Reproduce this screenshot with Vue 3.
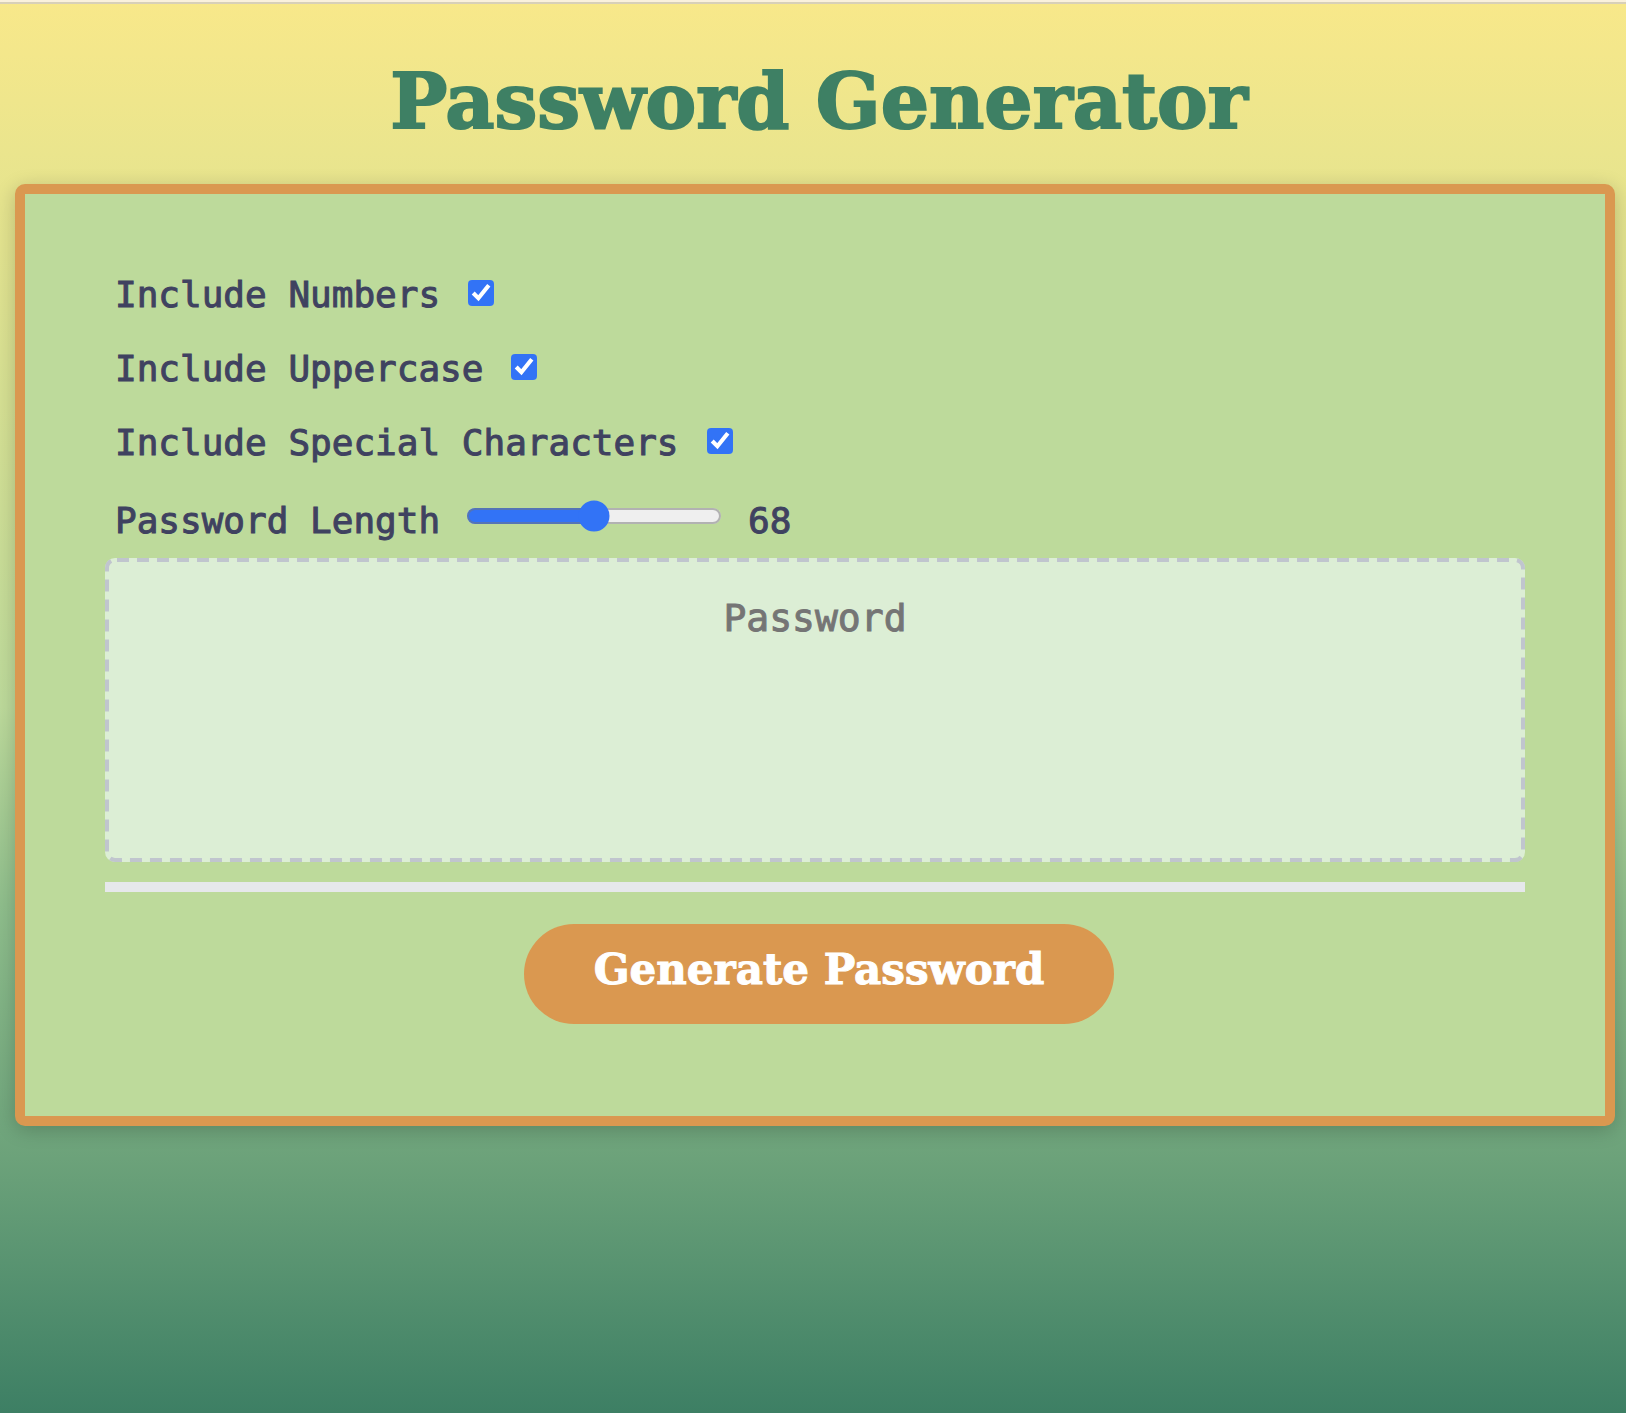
<script setup>
import { ref } from 'vue'

const options = ref([
  { id: 'numbers', label: 'Include Numbers', checked: true },
  { id: 'uppercase', label: 'Include Uppercase', checked: true },
  { id: 'special', label: 'Include Special Characters', checked: true },
])
const length = ref(68)
const password = ref('')

const pools = {
  numbers: '0123456789',
  uppercase: 'ABCDEFGHIJKLMNOPQRSTUVWXYZ',
  special: '!@#$%^&*()-_=+?',
}

function generate() {
  const chars = options.value
    .filter((option) => option.checked)
    .reduce((all, option) => all + pools[option.id], 'abcdefghijklmnopqrstuvwxyz')
  password.value = Array.from(
    { length: Number(length.value) },
    () => chars[Math.floor(Math.random() * chars.length)],
  ).join('')
}
</script>

<template>
  <div class="page">
    <header>
      <h1>Password Generator</h1>
    </header>
    <main class="card">
      <div v-for="option in options" :key="option.id" class="row">
        <label :for="option.id">{{ option.label }}</label>
        <input :id="option.id" v-model="option.checked" type="checkbox" />
      </div>
      <div class="row row-length">
        <label for="length">Password Length</label>
        <input id="length" v-model="length" type="range" min="8" max="128" />
        <output for="length">{{ length }}</output>
      </div>
      <div class="result">
        <textarea v-model="password" readonly placeholder="Password" aria-label="Password"></textarea>
        <svg class="dashes" aria-hidden="true">
          <rect x="2" y="2" rx="8" />
        </svg>
      </div>
      <hr />
      <button type="button" @click="generate">Generate Password</button>
    </main>
  </div>
</template>

<style>
body {
  margin: 0;
}
</style>

<style scoped>
.page {
  box-sizing: border-box;
  min-height: 100vh;
  padding: 2px 11px 40px 15px;
  border-top: 2px solid #faf1dc;
  background: linear-gradient(#f8e88a 0%, #e6e48e 14%, #bdda9b 50%, #8fbe8c 64%, #6ca27a 82%, #3d7f64 100%);
  box-shadow: inset 0 2px 0 #d8d0b8;
  font-family: "DejaVu Sans Mono", "Liberation Mono", monospace;
  color: #3f4260;
}

h1 {
  margin: 0;
  padding: 48px 0 32px 8px;
  font: bold 76px/100px "DejaVu Serif", serif;
  text-align: center;
  color: #3e8064;
  -webkit-text-stroke: 2px #3e8064;
}

.card {
  display: flex;
  flex-direction: column;
  box-sizing: border-box;
  padding: 64px 80px 92px;
  border: 10px solid #da9850;
  border-radius: 10px;
  background: #bdda9b;
  box-shadow: 0 4px 20px rgba(0, 0, 0, 0.2);
}

.row {
  display: flex;
  align-items: center;
  box-sizing: border-box;
  height: 74px;
  padding-left: 10px;
  font-size: 36px;
  line-height: 48px;
  -webkit-text-stroke: 1px #3f4260;
}

.row-length {
  height: 78px;
  padding-top: 4px;
}

input {
  zoom: 2;
  accent-color: #3273f6;
}

input[type="checkbox"] {
  margin: 0 14px 2px;
}

input[type="range"] {
  width: 128px;
  margin: 0 13px 5px;
}

.result {
  position: relative;
  height: 304px;
}

textarea {
  display: block;
  box-sizing: border-box;
  width: 100%;
  height: 100%;
  padding: 34px;
  border: 0;
  border-radius: 10px;
  background: #dceed5;
  font: 38px/52px "DejaVu Sans Mono", "Liberation Mono", monospace;
  text-align: center;
  color: #3f4260;
  resize: none;
}

textarea::placeholder {
  color: #757575;
  -webkit-text-stroke: 1px #757575;
}

.dashes {
  position: absolute;
  inset: 0;
  width: 100%;
  height: 100%;
  pointer-events: none;
}

.dashes rect {
  width: calc(100% - 4px);
  height: calc(100% - 4px);
  fill: none;
  stroke: #c0c5ce;
  stroke-width: 4px;
  stroke-dasharray: 12 8;
  stroke-dashoffset: -2px;
}

hr {
  align-self: stretch;
  height: 10px;
  margin: 20px 0 32px;
  border: 0;
  background: #e6e8eb;
}

button {
  align-self: center;
  height: 100px;
  margin-left: 8px;
  padding: 0 70px 8px;
  border: 0;
  border-radius: 50px;
  background: #da9850;
  font: bold 42px/48px "DejaVu Serif", serif;
  color: #fff;
  -webkit-text-stroke: 1px #fff;
}
</style>
